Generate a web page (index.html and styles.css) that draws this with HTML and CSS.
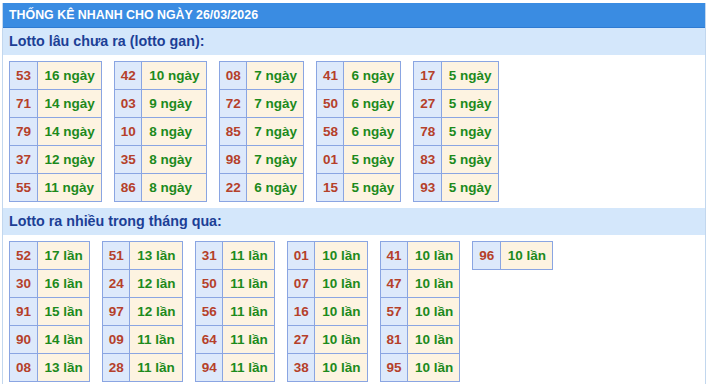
FILE: index.html
```html
<!DOCTYPE html>
<html lang="vi">
<head>
<meta charset="utf-8">
<title>Thống kê nhanh</title>
<link rel="stylesheet" href="styles.css">
</head>
<body>
<div class="box">
  <div class="title">THỐNG KÊ NHANH CHO NGÀY 26/03/2026</div>
  <div class="sub">Lotto lâu chưa ra (lotto gan):</div>
  <div class="group">
    <table class="t"><tbody>
      <tr><td class="n">53</td><td class="v">16 ngày</td></tr>
      <tr><td class="n">71</td><td class="v">14 ngày</td></tr>
      <tr><td class="n">79</td><td class="v">14 ngày</td></tr>
      <tr><td class="n">37</td><td class="v">12 ngày</td></tr>
      <tr><td class="n">55</td><td class="v">11 ngày</td></tr>
    </tbody></table>
    <table class="t"><tbody>
      <tr><td class="n">42</td><td class="v">10 ngày</td></tr>
      <tr><td class="n">03</td><td class="v">9 ngày</td></tr>
      <tr><td class="n">10</td><td class="v">8 ngày</td></tr>
      <tr><td class="n">35</td><td class="v">8 ngày</td></tr>
      <tr><td class="n">86</td><td class="v">8 ngày</td></tr>
    </tbody></table>
    <table class="t"><tbody>
      <tr><td class="n">08</td><td class="v">7 ngày</td></tr>
      <tr><td class="n">72</td><td class="v">7 ngày</td></tr>
      <tr><td class="n">85</td><td class="v">7 ngày</td></tr>
      <tr><td class="n">98</td><td class="v">7 ngày</td></tr>
      <tr><td class="n">22</td><td class="v">6 ngày</td></tr>
    </tbody></table>
    <table class="t"><tbody>
      <tr><td class="n">41</td><td class="v">6 ngày</td></tr>
      <tr><td class="n">50</td><td class="v">6 ngày</td></tr>
      <tr><td class="n">58</td><td class="v">6 ngày</td></tr>
      <tr><td class="n">01</td><td class="v">5 ngày</td></tr>
      <tr><td class="n">15</td><td class="v">5 ngày</td></tr>
    </tbody></table>
    <table class="t"><tbody>
      <tr><td class="n">17</td><td class="v">5 ngày</td></tr>
      <tr><td class="n">27</td><td class="v">5 ngày</td></tr>
      <tr><td class="n">78</td><td class="v">5 ngày</td></tr>
      <tr><td class="n">83</td><td class="v">5 ngày</td></tr>
      <tr><td class="n">93</td><td class="v">5 ngày</td></tr>
    </tbody></table>
  </div>
  <div class="sub">Lotto ra nhiều trong tháng qua:</div>
  <div class="group">
    <table class="t"><tbody>
      <tr><td class="n">52</td><td class="v">17 lần</td></tr>
      <tr><td class="n">30</td><td class="v">16 lần</td></tr>
      <tr><td class="n">91</td><td class="v">15 lần</td></tr>
      <tr><td class="n">90</td><td class="v">14 lần</td></tr>
      <tr><td class="n">08</td><td class="v">13 lần</td></tr>
    </tbody></table>
    <table class="t"><tbody>
      <tr><td class="n">51</td><td class="v">13 lần</td></tr>
      <tr><td class="n">24</td><td class="v">12 lần</td></tr>
      <tr><td class="n">97</td><td class="v">12 lần</td></tr>
      <tr><td class="n">09</td><td class="v">11 lần</td></tr>
      <tr><td class="n">28</td><td class="v">11 lần</td></tr>
    </tbody></table>
    <table class="t"><tbody>
      <tr><td class="n">31</td><td class="v">11 lần</td></tr>
      <tr><td class="n">50</td><td class="v">11 lần</td></tr>
      <tr><td class="n">56</td><td class="v">11 lần</td></tr>
      <tr><td class="n">64</td><td class="v">11 lần</td></tr>
      <tr><td class="n">94</td><td class="v">11 lần</td></tr>
    </tbody></table>
    <table class="t"><tbody>
      <tr><td class="n">01</td><td class="v">10 lần</td></tr>
      <tr><td class="n">07</td><td class="v">10 lần</td></tr>
      <tr><td class="n">16</td><td class="v">10 lần</td></tr>
      <tr><td class="n">27</td><td class="v">10 lần</td></tr>
      <tr><td class="n">38</td><td class="v">10 lần</td></tr>
    </tbody></table>
    <table class="t"><tbody>
      <tr><td class="n">41</td><td class="v">10 lần</td></tr>
      <tr><td class="n">47</td><td class="v">10 lần</td></tr>
      <tr><td class="n">57</td><td class="v">10 lần</td></tr>
      <tr><td class="n">81</td><td class="v">10 lần</td></tr>
      <tr><td class="n">95</td><td class="v">10 lần</td></tr>
    </tbody></table>
    <table class="t"><tbody>
      <tr><td class="n">96</td><td class="v">10 lần</td></tr>
    </tbody></table>
  </div>
</div>
</body>
</html>
```

FILE: styles.css
```css
html, body {
  margin: 0;
  padding: 0;
  background: #ffffff;
}
body {
  font-family: "Liberation Sans", Arial, sans-serif;
}
.box {
  margin: 3px 2px 0 2px;
  width: 702px;
  border-left: 1px solid #c2d7ee;
  border-right: 1px solid #c2d7ee;
  border-bottom: 1px solid #c2d7ee;
}
.title {
  height: 24px;
  line-height: 25px;
  background: #3a8ce2;
  border-bottom: 1px solid #2f7bd2;
  color: #ffffff;
  font-size: 12.4px;
  font-weight: bold;
  padding-left: 6px;
}
.sub {
  height: 27px;
  line-height: 27px;
  background: #d4e7fb;
  color: #1c3f96;
  font-size: 14.3px;
  font-weight: bold;
  padding-left: 6px;
}
.group {
  display: flex;
  flex-wrap: wrap;
  align-items: flex-start;
  gap: 12px;
  padding: 6px;
}
.t {
  border-collapse: collapse;
  font-size: 13.5px;
  font-weight: bold;
}
.t td {
  border: 1px solid #8aa5e2;
  line-height: 27px;
  height: 27px;
  white-space: nowrap;
}
.t td.n {
  padding: 0 5.5px 0 6px;
  background: #dde9fb;
  color: #b5402a;
}
.t td.v {
  padding: 0 6px 0 7px;
  background: #fdf3e1;
  color: #1c8a1c;
}
```
